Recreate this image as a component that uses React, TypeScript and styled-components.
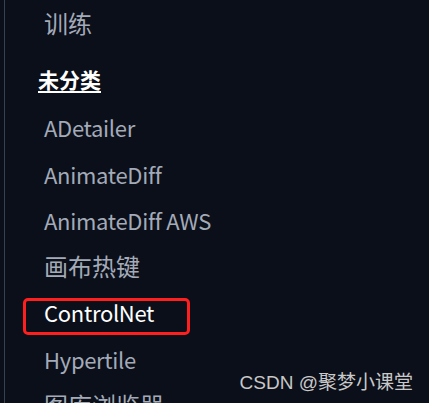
import React from "react";
import styled, { createGlobalStyle } from "styled-components";

const GlobalStyle = createGlobalStyle`
  html, body {
    margin: 0;
    padding: 0;
    background: #0b0f19;
  }
  body {
    height: 403px;
    overflow: hidden;
    font-family: "Noto Sans CJK SC", "Noto Sans", sans-serif;
  }
`;

const StPage = styled.main`
  position: relative;
  height: 403px;
  overflow: hidden;
  background: #0b0f19;
`;

const StSidebar = styled.nav`
  margin-left: 4px;
  height: 100%;
  border-left: 1px solid #374151;
  padding: 0 0 0 33px;
  box-sizing: border-box;
`;

const StHeading = styled.div`
  margin: 18px 0 10px;
  font-size: 21px;
  line-height: 30px;
  font-weight: 700;
  color: #ffffff;
  text-decoration: underline;
  text-underline-offset: 3px;
  text-decoration-thickness: 2px;
`;

const StItem = styled.div<{ $cjk?: boolean; $active?: boolean; $marked?: boolean }>`
  position: relative;
  height: 46.3px;
  line-height: 46.3px;
  padding-left: 6px;
  font-size: ${(p) => (p.$cjk ? "24px" : "22px")};
  letter-spacing: ${(p) => (p.$cjk ? "0" : "-0.3px")};
  color: ${(p) => (p.$active ? "#ffffff" : "#a3aab8")};
  white-space: nowrap;

  ${(p) =>
    p.$marked &&
    `
    &::after {
      content: "";
      position: absolute;
      left: -15px;
      top: 9px;
      width: 167px;
      height: 37px;
      box-sizing: border-box;
      border: 3px solid #ff1f1f;
      border-radius: 5px;
    }
  `}
`;

const StWatermark = styled.div`
  position: absolute;
  right: 16px;
  bottom: 9px;
  font-family: "Liberation Sans", "Noto Sans CJK SC", sans-serif;
  font-size: 19px;
  color: #c8c8c8;
`;

const items = [
  { name: "ADetailer" },
  { name: "AnimateDiff" },
  { name: "AnimateDiff AWS" },
  { name: "画布热键", cjk: true },
  { name: "ControlNet", marked: true },
  { name: "Hypertile" },
  { name: "图库浏览器", cjk: true },
];

export default function App() {
  return (
    <StPage>
      <GlobalStyle />
      <StSidebar>
        <StItem $cjk>训练</StItem>
        <StHeading>未分类</StHeading>
        {items.map((item) => (
          <StItem
            key={item.name}
            $cjk={item.cjk}
            $active={item.marked}
            $marked={item.marked}
          >
            {item.name}
          </StItem>
        ))}
      </StSidebar>
      <StWatermark>CSDN @聚梦小课堂</StWatermark>
    </StPage>
  );
}
